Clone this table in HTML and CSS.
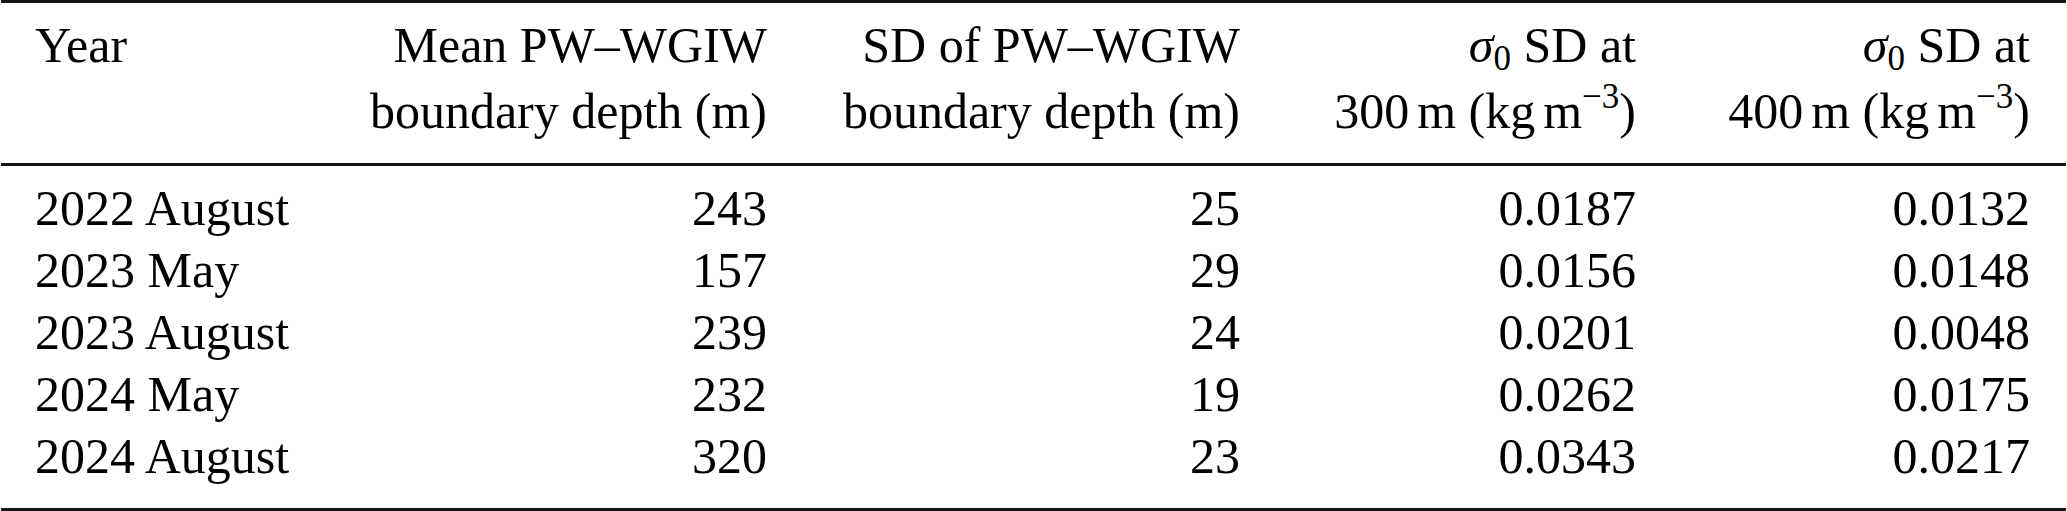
FILE: index.html
```html
<!DOCTYPE html>
<html>
<head>
<meta charset="utf-8">
<link rel="stylesheet" href="styles.css">
</head>
<body>
<table class="tbl">
  <colgroup>
    <col class="c1"><col class="c2"><col class="c3"><col class="c4"><col class="c5">
  </colgroup>
  <thead>
    <tr>
      <th class="left"><div class="l1">Year</div><div class="l2">&nbsp;</div></th>
      <th><div class="l1">Mean PW–WGIW</div><div class="l2">boundary depth (m)</div></th>
      <th><div class="l1">SD of PW–WGIW</div><div class="l2">boundary depth (m)</div></th>
      <th><div class="l1"><span class="sig">σ</span><span class="sub">0</span> SD at</div><div class="l2">300<span class="thin"></span>m (kg<span class="thin"></span>m<span class="sup">−3</span>)</div></th>
      <th><div class="l1"><span class="sig">σ</span><span class="sub">0</span> SD at</div><div class="l2">400<span class="thin"></span>m (kg<span class="thin"></span>m<span class="sup">−3</span>)</div></th>
    </tr>
  </thead>
  <tbody>
    <tr><td class="left">2022 August</td><td>243</td><td>25</td><td>0.0187</td><td>0.0132</td></tr>
    <tr><td class="left">2023 May</td><td>157</td><td>29</td><td>0.0156</td><td>0.0148</td></tr>
    <tr><td class="left">2023 August</td><td>239</td><td>24</td><td>0.0201</td><td>0.0048</td></tr>
    <tr><td class="left">2024 May</td><td>232</td><td>19</td><td>0.0262</td><td>0.0175</td></tr>
    <tr><td class="left">2024 August</td><td>320</td><td>23</td><td>0.0343</td><td>0.0217</td></tr>
  </tbody>
</table>
</body>
</html>
```
FILE: styles.css
```css
html, body {
  margin: 0;
  padding: 0;
  background: #fff;
}
body {
  font-family: "Liberation Serif", "Times New Roman", serif;
  font-size: 50px;
  color: #000;
}
.tbl {
  margin-left: 1px;
  width: 2065px;
  table-layout: fixed;
  border-collapse: collapse;
  border-top: 3px solid #151515;
  border-bottom: 3px solid #151515;
}
.c1 { width: 359px; }
.c2 { width: 443px; }
.c3 { width: 473px; }
.c4 { width: 396px; }
.c5 { width: 394px; }
.tbl thead {
  border-bottom: 3px solid #151515;
}
.tbl th, .tbl td {
  font-weight: normal;
  text-align: right;
  padding: 0 36px 0 0;
  line-height: 62px;
  white-space: nowrap;
  vertical-align: top;
}
.tbl th {
  padding-top: 11px;
  padding-bottom: 21px;
}
.tbl .left {
  text-align: left;
  padding-left: 34px;
  padding-right: 0;
}
.l1 { height: 62px; }
.l2 { height: 62px; margin-top: 4px; }
.tbl tbody tr:first-child td { padding-top: 11px; }
.tbl tbody tr:last-child td { padding-bottom: 21px; }
.sig { font-style: italic; }
.sub {
  font-size: 35px;
  position: relative;
  top: 8px;
  line-height: 0;
}
.sup {
  font-size: 35px;
  position: relative;
  top: -20px;
  line-height: 0;
}
.thin {
  display: inline-block;
  width: 8px;
}
```
